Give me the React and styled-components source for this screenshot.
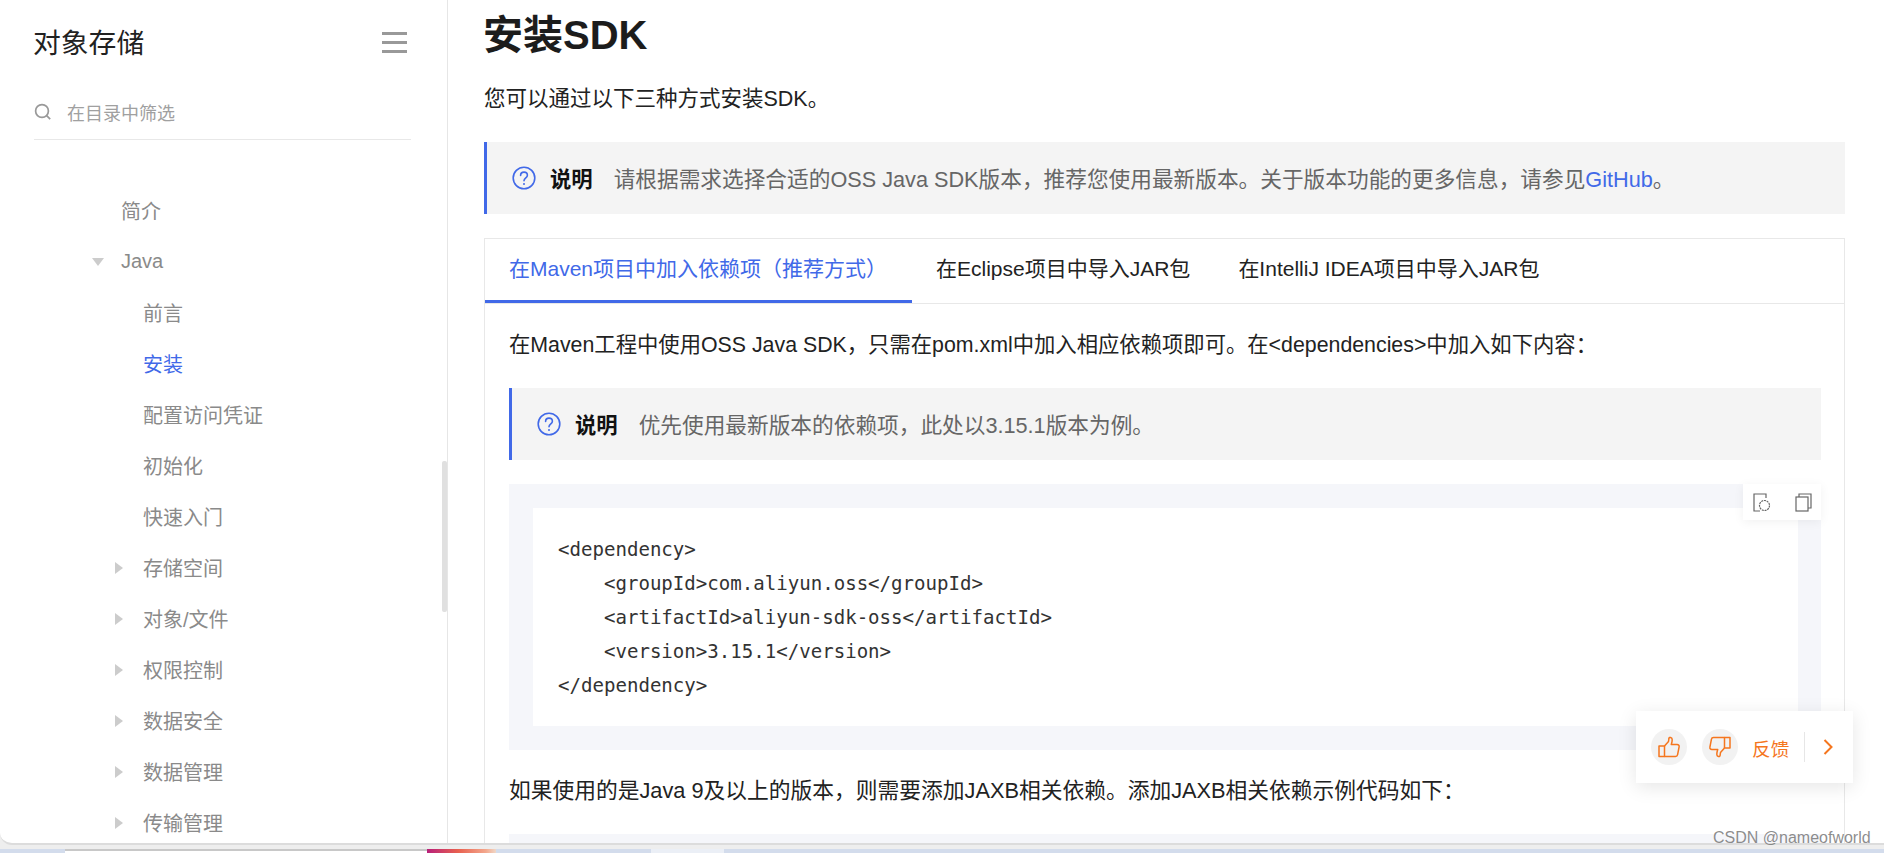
import React from "react";
import styled, { createGlobalStyle } from "styled-components";

const GlobalStyle = createGlobalStyle`
  html, body {
    margin: 0;
    padding: 0;
    background: #fff;
    overflow: hidden;
  }
  * {
    box-sizing: border-box;
  }
`;

const BLUE = "#4169e8";
const ORANGE = "#f5761e";
const FONT = `"Liberation Sans", "Noto Sans CJK SC", sans-serif`;

const Screen = styled.div`
  position: relative;
  width: 1884px;
  height: 853px;
  display: flex;
  flex-direction: column;
  overflow: hidden;
  font-family: ${FONT};
  background: #eeeeee;
`;

const Browser = styled.div`
  flex: none;
  height: 845px;
  display: flex;
  background: #fff;
  border-bottom: 2px solid #dcdcdc;
  border-bottom-left-radius: 12px;
  overflow: hidden;
`;

const Sidebar = styled.aside`
  position: relative;
  flex: none;
  width: 448px;
  height: 100%;
  border-right: 1px solid #e6e6e6;
  overflow: hidden;
`;

const SideHeader = styled.div`
  height: 84px;
  padding: 0 40px 2px 33px;
  display: flex;
  align-items: center;
  justify-content: space-between;
`;

const SideTitle = styled.h2`
  margin: 0;
  font-size: 27.8px;
  font-weight: 400;
  color: #222;
`;

const Hamburger = styled.div`
  width: 25px;
  height: 21px;
  margin-top: 2px;
  border-top: 3px solid #999;
  border-bottom: 3px solid #999;
  display: flex;
  align-items: center;
  &::before {
    content: "";
    width: 100%;
    height: 3px;
    background: #999;
  }
`;

const SearchRow = styled.div`
  margin: 0 36px 0 34px;
  height: 56px;
  display: flex;
  align-items: center;
  gap: 15px;
  border-bottom: 1px solid #e8e8e8;
  font-size: 18px;
  color: #a0a0a0;
`;

const NavList = styled.ul`
  list-style: none;
  margin: 0;
  padding: 45px 0 0;
`;

const NavRow = styled.li`
  height: 51.03px;
  display: flex;
  align-items: center;
  padding-left: ${(p) => (p.$level === 1 ? 121 : 143)}px;
  font-size: 20px;
  color: ${(p) => (p.$active ? BLUE : "#8a8a8a")};
`;

const Caret = styled.span`
  flex: none;
  width: 0;
  height: 0;
  margin-left: ${(p) => (p.$open ? -30 : -28)}px;
  margin-right: ${(p) => (p.$open ? 18 : 20)}px;
  ${(p) =>
    p.$open
      ? `transform: translateX(1px);
         border-left: 6px solid transparent;
         border-right: 6px solid transparent;
         border-top: 8px solid #cccccc;`
      : `border-top: 6px solid transparent;
         border-bottom: 6px solid transparent;
         border-left: 8px solid #cccccc;`}
`;

const ScrollThumb = styled.div`
  position: absolute;
  right: 0;
  top: 461px;
  width: 5px;
  height: 151px;
  background: #e0e0e0;
  border-radius: 2px;
`;

const Main = styled.main`
  flex: 1;
  min-width: 0;
  height: 100%;
  padding: 0 39px 0 36px;
  overflow: hidden;
`;

const PageTitle = styled.h1`
  margin: 0 0 0 -1px;
  padding-top: 12px;
  height: 82px;
  line-height: 46px;
  font-size: 40px;
  font-weight: 700;
  color: #1c1c1c;
`;

const Paragraph = styled.p`
  margin: ${(p) => p.$top || 0}px 0 0;
  font-size: ${(p) => p.$size || 21.33}px;
  line-height: 34px;
  color: #222;
`;

const Note = styled.div`
  height: 72px;
  margin-top: ${(p) => p.$top}px;
  padding: 0 0 2px 25px;
  display: flex;
  align-items: center;
  background: #f4f4f4;
  border-left: 3px solid ${BLUE};
`;

const NoteIcon = styled.svg`
  flex: none;
  margin-top: 2px;
`;

const NoteLabel = styled.strong`
  margin: 0 21px 0 14px;
  font-size: 21.33px;
  color: #111;
  font-weight: 700;
`;

const NoteText = styled.span`
  font-size: 21.68px;
  color: #666;
  a {
    color: ${BLUE};
    text-decoration: none;
  }
`;

const TabBox = styled.section`
  margin-top: 24px;
  border: 1px solid #e8e8e8;
  border-bottom: 0;
`;

const TabBar = styled.div`
  height: 65px;
  display: flex;
  border-bottom: 1px solid #e8e8e8;
`;

const Tab = styled.div`
  height: 64px;
  padding: 0 24px 5px;
  display: flex;
  align-items: center;
  font-size: 21px;
  white-space: nowrap;
  color: ${(p) => (p.$active ? BLUE : "#222")};
  border-bottom: 3px solid ${(p) => (p.$active ? BLUE : "transparent")};
  ${(p) => p.$active && "width: 427px;"}
`;

const TabPanel = styled.div`
  padding: 24px 23px 0 24px;
`;

const CodeBlock = styled.div`
  position: relative;
  margin-top: ${(p) => p.$top || 0}px;
  padding: 24px 23px 24px 24px;
  background: #f5f6fa;
  min-height: ${(p) => (p.$empty ? 60 : 0)}px;
`;

const CodeInner = styled.pre`
  margin: 0;
  height: 218px;
  padding: 24px 25px;
  background: #fff;
  font-family: "DejaVu Sans Mono", monospace;
  font-size: 19.08px;
  line-height: 34px;
  color: #333;
`;

const CodeTools = styled.div`
  position: absolute;
  top: 0;
  right: 0;
  width: 78px;
  height: 36px;
  padding: 0 9px 0 10px;
  display: flex;
  align-items: center;
  justify-content: space-between;
  background: #fff;
  box-shadow: 0 2px 10px rgba(0, 0, 0, 0.06);
`;

const Feedback = styled.div`
  position: absolute;
  left: 1636px;
  top: 711px;
  width: 217px;
  height: 72px;
  padding-left: 15px;
  display: flex;
  align-items: center;
  background: #fff;
  box-shadow: 0 4px 18px rgba(0, 0, 0, 0.1);
`;

const VoteButton = styled.div`
  flex: none;
  width: 36px;
  height: 36px;
  margin-right: 15px;
  border-radius: 50%;
  background: #f2f2f2;
  display: flex;
  align-items: center;
  justify-content: center;
`;

const FeedbackLabel = styled.span`
  margin-left: -1px;
  font-size: 18.67px;
  color: ${ORANGE};
`;

const FeedbackDivider = styled.span`
  width: 1px;
  height: 30px;
  margin: 0 18px 0 15px;
  background: #e6e6e6;
`;

const Watermark = styled.span`
  position: absolute;
  left: 1713px;
  top: 828px;
  font-size: 16px;
  line-height: 20px;
  white-space: nowrap;
  color: rgba(120, 120, 120, 0.85);
`;

const Taskbar = styled.div`
  flex: 1;
  display: flex;
  align-items: flex-end;
`;

const TaskSlice = styled.div`
  height: 4px;
  width: ${(p) => p.$w}px;
  flex: ${(p) => (p.$w ? "none" : 1)};
  background: ${(p) => p.$bg};
`;

const HelpIcon = () => (
  <NoteIcon width="24" height="24" viewBox="0 0 24 24" fill="none" stroke={BLUE} strokeWidth="1.6">
    <circle cx="12" cy="12" r="10.8" />
    <path d="M8.6 9.4c0-2 1.5-3.3 3.4-3.3s3.4 1.3 3.4 3.1c0 2.6-3.4 2.7-3.4 5.6" strokeLinecap="round" />
    <circle cx="12" cy="17.9" r="1" fill={BLUE} stroke="none" />
  </NoteIcon>
);

const SearchIcon = () => (
  <svg width="18" height="18" viewBox="0 0 18 18" fill="none" stroke="#999" strokeWidth="1.7">
    <circle cx="8" cy="8" r="6.4" />
    <path d="M12.6 12.6l3.6 3.6" />
  </svg>
);

const DocIcon = () => (
  <svg width="18" height="19" viewBox="0 0 18 19" fill="none" stroke="#666" strokeWidth="1.2">
    <path d="M7 18H1V1h12v4" />
    <circle cx="11.5" cy="12.5" r="5" strokeDasharray="2 0.8" />
  </svg>
);

const CopyIcon = () => (
  <svg width="17" height="19" viewBox="0 0 17 19" fill="none" stroke="#666" strokeWidth="1.2">
    <rect x="1" y="4" width="12" height="14" />
    <path d="M4 4V1h12v14h-3" />
  </svg>
);

const ThumbIcon = ({ down }) => (
  <svg
    width="22"
    height="22"
    viewBox="0 0 22 22"
    fill="none"
    stroke={ORANGE}
    strokeWidth="1.5"
    strokeLinejoin="round"
    style={down ? { transform: "rotate(180deg)" } : undefined}
  >
    <path d="M1 10h5.500v10.500H1z" />
    <path d="M6.500 10L10.500 5.500 11 2.200c.1-1.200 3.200-1.200 3.200 1.600 0 1.600-.5 3.400-.9 4.700h5.800c1.500 0 2.300 1 2 2.300l-1.500 7.900c-.2 1.100-1 1.800-2.100 1.800H6.500" />
  </svg>
);

const ChevronIcon = () => (
  <svg width="10" height="16" viewBox="0 0 10 16" fill="none" stroke={ORANGE} strokeWidth="2">
    <path d="M1.500 1l7 7-7 7" />
  </svg>
);

const navItems = [
  { label: "简介", level: 1 },
  { label: "Java", level: 1, caret: "open" },
  { label: "前言", level: 2 },
  { label: "安装", level: 2, active: true },
  { label: "配置访问凭证", level: 2 },
  { label: "初始化", level: 2 },
  { label: "快速入门", level: 2 },
  { label: "存储空间", level: 2, caret: "closed" },
  { label: "对象/文件", level: 2, caret: "closed" },
  { label: "权限控制", level: 2, caret: "closed" },
  { label: "数据安全", level: 2, caret: "closed" },
  { label: "数据管理", level: 2, caret: "closed" },
  { label: "传输管理", level: 2, caret: "closed" },
];

const codeSample = `<dependency>
    <groupId>com.aliyun.oss</groupId>
    <artifactId>aliyun-sdk-oss</artifactId>
    <version>3.15.1</version>
</dependency>`;

const taskSlices = [
  { w: 65, bg: "#d3dcec" },
  { w: 362, bg: "linear-gradient(#c8c8c8 2px, #ffffff 2px)" },
  { w: 69, bg: "linear-gradient(90deg, #b8207a, #e8604f 45%, #f3a78c 85%, #f0d8c8)" },
  { w: 155, bg: "#d3dcec" },
  { w: 73, bg: "#ebeff6" },
  { bg: "#d3dcec" },
];

export default function App() {
  return (
    <>
      <GlobalStyle />
      <Screen>
        <Browser>
          <Sidebar>
            <SideHeader>
              <SideTitle>对象存储</SideTitle>
              <Hamburger />
            </SideHeader>
            <SearchRow>
              <SearchIcon />
              在目录中筛选
            </SearchRow>
            <NavList>
              {navItems.map((item) => (
                <NavRow key={item.label} $level={item.level} $active={item.active}>
                  {item.caret && <Caret $open={item.caret === "open"} />}
                  {item.label}
                </NavRow>
              ))}
            </NavList>
            <ScrollThumb />
          </Sidebar>
          <Main>
            <PageTitle>安装SDK</PageTitle>
            <Paragraph $size={21.5}>您可以通过以下三种方式安装SDK。</Paragraph>
            <Note $top={26}>
              <HelpIcon />
              <NoteLabel>说明</NoteLabel>
              <NoteText>
                请根据需求选择合适的OSS Java SDK版本，推荐您使用最新版本。关于版本功能的更多信息，请参见<a href="#github">GitHub</a>。
              </NoteText>
            </Note>
            <TabBox>
              <TabBar>
                <Tab $active>在Maven项目中加入依赖项（推荐方式）</Tab>
                <Tab>在Eclipse项目中导入JAR包</Tab>
                <Tab>在IntelliJ IDEA项目中导入JAR包</Tab>
              </TabBar>
              <TabPanel>
                <Paragraph>在Maven工程中使用OSS Java SDK，只需在pom.xml中加入相应依赖项即可。在&lt;dependencies&gt;中加入如下内容：</Paragraph>
                <Note $top={26}>
                  <HelpIcon />
                  <NoteLabel>说明</NoteLabel>
                  <NoteText>优先使用最新版本的依赖项，此处以3.15.1版本为例。</NoteText>
                </Note>
                <CodeBlock $top={24}>
                  <CodeInner>{codeSample}</CodeInner>
                  <CodeTools>
                    <DocIcon />
                    <CopyIcon />
                  </CodeTools>
                </CodeBlock>
                <Paragraph $top={24} $size={21.76}>如果使用的是Java 9及以上的版本，则需要添加JAXB相关依赖。添加JAXB相关依赖示例代码如下：</Paragraph>
                <CodeBlock $top={26} $empty />
              </TabPanel>
            </TabBox>
          </Main>
        </Browser>
        <Taskbar>
          {taskSlices.map((slice, i) => (
            <TaskSlice key={i} $w={slice.w} $bg={slice.bg} />
          ))}
        </Taskbar>
        <Feedback>
          <VoteButton>
            <ThumbIcon />
          </VoteButton>
          <VoteButton>
            <ThumbIcon down />
          </VoteButton>
          <FeedbackLabel>反馈</FeedbackLabel>
          <FeedbackDivider />
          <ChevronIcon />
        </Feedback>
        <Watermark>CSDN @nameofworld</Watermark>
      </Screen>
    </>
  );
}
